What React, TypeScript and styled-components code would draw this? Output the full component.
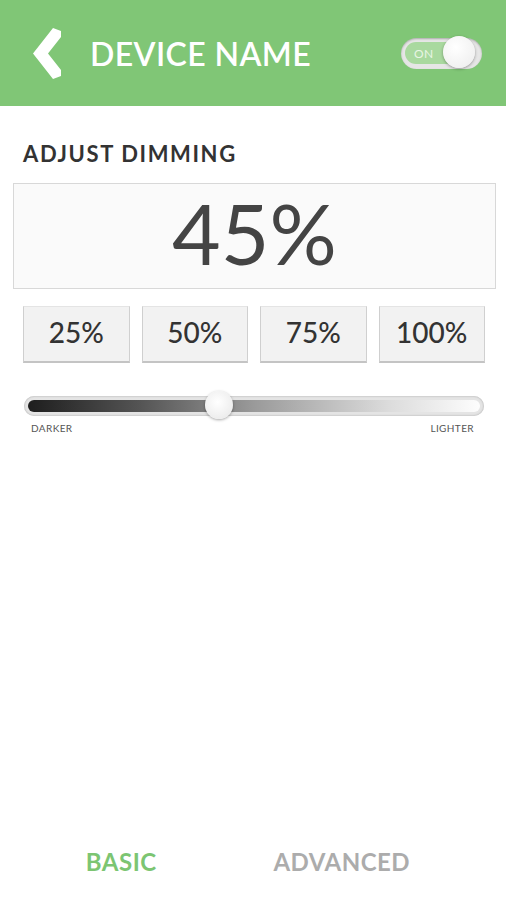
import styled, { createGlobalStyle } from "styled-components";

const GlobalStyle = createGlobalStyle`
  html, body {
    margin: 0;
    padding: 0;
    background: #ffffff;
  }
  body {
    font-family: "Lato", "Open Sans", sans-serif;
  }
`;

const Screen = styled.div`
  width: 506px;
  height: 900px;
  display: flex;
  flex-direction: column;
  background: #ffffff;
`;

const Header = styled.header`
  height: 106px;
  background: #80c676;
  display: flex;
  align-items: center;
  padding: 0 24px 0 33px;
  box-sizing: border-box;
`;

const BackButton = styled.button`
  border: 0;
  background: none;
  padding: 0;
  width: 29px;
  height: 51px;
  display: flex;
  cursor: pointer;
`;

const Title = styled.h1`
  margin: 0 0 0 28px;
  flex: 1;
  color: #ffffff;
  font-size: 32px;
  font-weight: 600;
  letter-spacing: 0.4px;
`;

const Toggle = styled.div`
  position: relative;
  width: 81px;
  height: 31px;
  border-radius: 16px;
  background: #e6e6e6;
  box-shadow: inset 0 1px 2px rgba(0, 0, 0, 0.25);
  display: flex;
  align-items: center;
  padding: 0 4px;
  box-sizing: border-box;
`;

const ToggleFill = styled.div`
  height: 22px;
  width: 46px;
  border-radius: 11px 0 0 11px;
  background: #a9d99f;
  color: #e8f5e4;
  font-size: 12px;
  display: flex;
  align-items: center;
  padding-left: 9px;
  box-sizing: border-box;
  letter-spacing: 0.5px;
`;

const Knob = styled.div`
  position: absolute;
  right: 7px;
  top: -2px;
  width: 32px;
  height: 32px;
  border-radius: 50%;
  background: radial-gradient(circle at 40% 35%, #ffffff, #ececec);
  box-shadow: 0 1px 3px rgba(0, 0, 0, 0.35);
`;

const Content = styled.main`
  flex: 1;
  padding: 34px 10px 0 13px;
  display: flex;
  flex-direction: column;
`;

const SectionLabel = styled.h2`
  margin: 0 0 16px 10px;
  font-size: 22px;
  font-weight: 700;
  color: #333333;
  letter-spacing: 1.6px;
`;

const ValueBox = styled.div`
  height: 106px;
  border: 1px solid #d8d8d8;
  background: #fafafa;
  display: flex;
  align-items: center;
  justify-content: center;
  padding-bottom: 8px;
  box-sizing: border-box;
  font-size: 84px;
  font-weight: 400;
  color: #444444;
`;

const Presets = styled.div`
  margin: 17px 0 0 10px;
  width: 462px;
  display: grid;
  grid-template-columns: repeat(4, 1fr);
  gap: 12px;
`;

const Preset = styled.button`
  height: 57px;
  background: #f2f2f2;
  border: 1px solid #e4e4e4;
  border-left-color: #cfcfcf;
  border-right-color: #d0d0d0;
  border-bottom: 2px solid #c4c4c4;
  font-family: "Lato", sans-serif;
  font-size: 28px;
  font-weight: 500;
  color: #333333;
  padding: 0 0 4px;
  cursor: pointer;
`;

const SliderWrap = styled.div`
  margin: 33px 0 0 11px;
  width: 460px;
`;

const Track = styled.div`
  position: relative;
  height: 20px;
  border-radius: 10px;
  background: #e4e4e4;
  box-shadow: inset 0 0 2px rgba(0, 0, 0, 0.3);
  padding: 4px;
  box-sizing: border-box;
`;

const TrackFill = styled.div`
  height: 100%;
  border-radius: 6px;
  background: linear-gradient(90deg, #1e1e1e 0%, #555 25%, #9a9a9a 50%, #dcdcdc 80%, #fdfdfd 100%);
`;

const Thumb = styled.div`
  position: absolute;
  top: -5px;
  width: 28px;
  height: 28px;
  margin-left: -14px;
  border-radius: 50%;
  background: radial-gradient(circle at 45% 40%, #ffffff, #e6e6e6);
  box-shadow: 0 1px 3px rgba(0, 0, 0, 0.35);
`;

const SliderLabels = styled.div`
  display: flex;
  justify-content: space-between;
  padding: 6px 10px 0 7px;
  font-size: 10px;
  color: #555555;
  letter-spacing: 0.4px;
`;

const Tabs = styled.nav`
  height: 80px;
  display: flex;
  align-items: flex-start;
  padding: 27px 54px 0 11px;
  box-sizing: border-box;
`;

const Tab = styled.button<{ $active?: boolean }>`
  flex: 1;
  border: 0;
  background: none;
  font-family: "Lato", sans-serif;
  font-size: 24px;
  font-weight: 700;
  letter-spacing: 0.5px;
  color: ${(p) => (p.$active ? "#7cc572" : "#acacac")};
  padding: 0;
  cursor: pointer;
`;

const presets = ["25%", "50%", "75%", "100%"];
const level = 45;

export default function App() {
  return (
    <>
      <GlobalStyle />
      <Screen>
        <Header>
          <BackButton aria-label="Back">
            <svg width="29" height="51" viewBox="0 0 29 51">
              <polygon points="20,0 28,3 28,9 15,25.5 28,42 28,48 20,51 0,25.5" fill="#ffffff" />
            </svg>
          </BackButton>
          <Title>DEVICE NAME</Title>
          <Toggle>
            <ToggleFill>ON</ToggleFill>
            <Knob />
          </Toggle>
        </Header>
        <Content>
          <SectionLabel>ADJUST DIMMING</SectionLabel>
          <ValueBox>{level}%</ValueBox>
          <Presets>
            {presets.map((p) => (
              <Preset key={p}>{p}</Preset>
            ))}
          </Presets>
          <SliderWrap>
            <Track>
              <TrackFill />
              <Thumb style={{ left: `${(level / 100) * 460 - 12}px` }} />
            </Track>
            <SliderLabels>
              <span>DARKER</span>
              <span>LIGHTER</span>
            </SliderLabels>
          </SliderWrap>
        </Content>
        <Tabs>
          <Tab $active>BASIC</Tab>
          <Tab>ADVANCED</Tab>
        </Tabs>
      </Screen>
    </>
  );
}
